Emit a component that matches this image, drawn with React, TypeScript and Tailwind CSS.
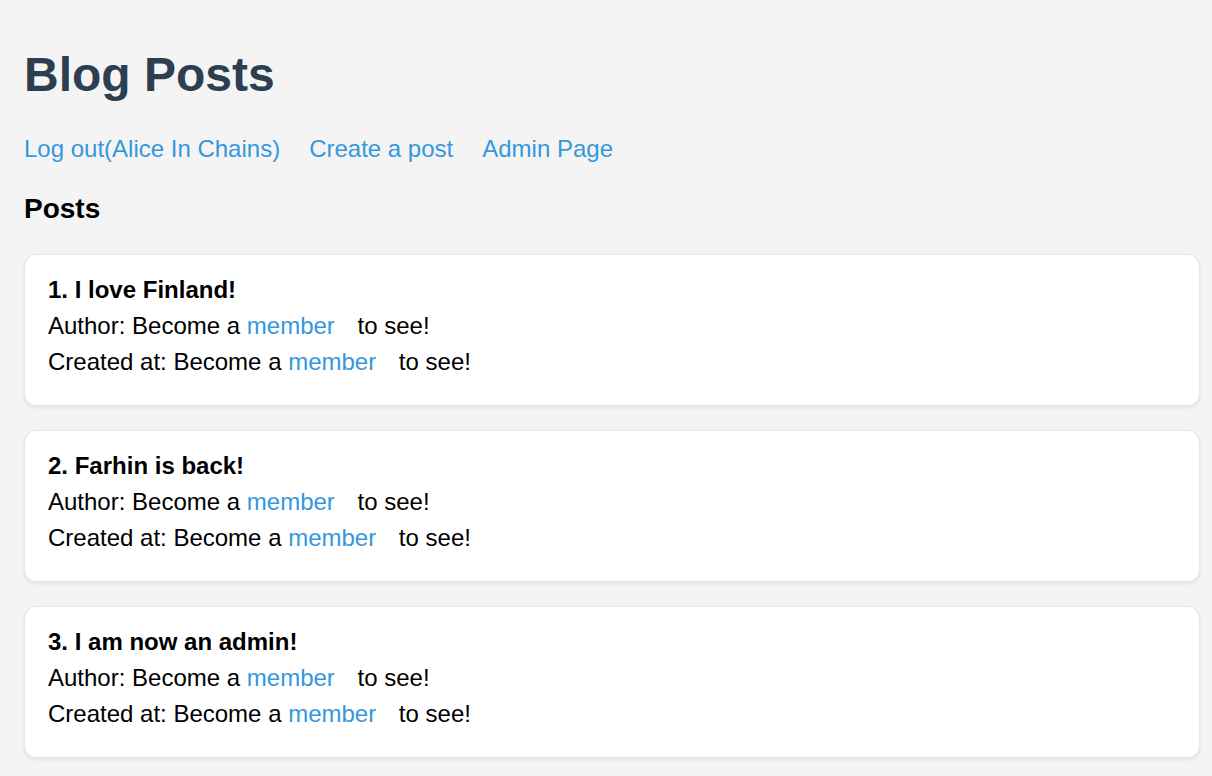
import React from "react";

const posts = ["I love Finland!", "Farhin is back!", "I am now an admin!"];

function Hidden({ label }: { label: string }) {
  return (
    <div className="leading-[36px] text-[24px] text-black">
      {label}: Become a{" "}
      <a href="#" className="text-[#3498db] mr-4">
        member
      </a>{" "}
      to see!
    </div>
  );
}

export default function App() {
  return (
    <div
      className="min-h-[776px] bg-[#f4f4f4] pl-6 pr-3 pt-[47px] pb-4"
      style={{ fontFamily: '"Liberation Sans", Arial, sans-serif' }}
    >
      <h1 className="text-[48px] leading-[56px] font-bold text-[#2c3e50]">Blog Posts</h1>
      <nav className="mt-[28px] flex gap-[29px] text-[24px] leading-[36px] text-[#3498db]">
        <a href="#">Log out(Alice In Chains)</a>
        <a href="#">Create a post</a>
        <a href="#">Admin Page</a>
      </nav>
      <h2 className="mt-[24px] text-[28px] leading-[36px] font-bold text-black">Posts</h2>
      <div className="mt-[27px] flex flex-col gap-6">
        {posts.map((t, i) => (
          <div
            key={i}
            className="h-[152px] rounded-xl border border-[#e6e6e6] bg-white pl-[23px] pr-6 pt-[17px] pb-6 shadow-[0_2px_5px_rgba(0,0,0,0.07)]"
          >
            <div className="text-[24px] leading-[36px] font-bold text-black">
              {i + 1}. {t}
            </div>
            <Hidden label="Author" />
            <Hidden label="Created at" />
          </div>
        ))}
      </div>
    </div>
  );
}
